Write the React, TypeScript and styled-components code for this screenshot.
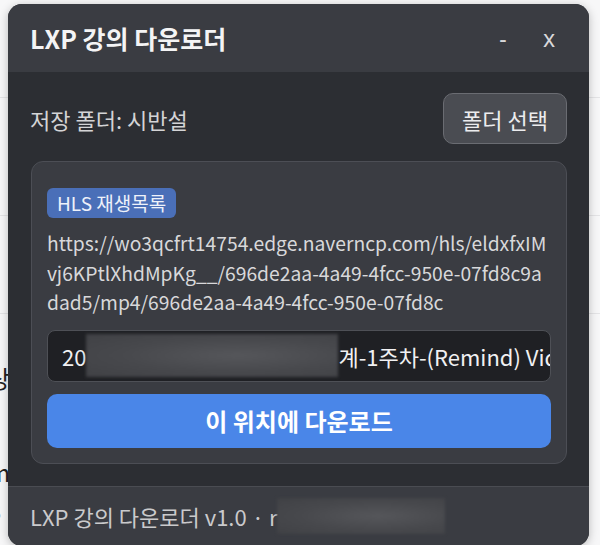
import styled, { createGlobalStyle } from "styled-components";

const GlobalStyle = createGlobalStyle`
  html, body {
    margin: 0;
    padding: 0;
    background: #f7f7f8;
  }
  body {
    font-family: "Noto Sans CJK KR", "Noto Sans", sans-serif;
  }
`;

const Desktop = styled.div`
  position: relative;
  width: 600px;
  height: 545px;
  overflow: hidden;
  background:
    linear-gradient(#e4e4e6, #e4e4e6) 0 97px / 100% 1px no-repeat,
    linear-gradient(#e4e4e6, #e4e4e6) 0 215px / 100% 1px no-repeat,
    linear-gradient(#e4e4e6, #e4e4e6) 0 313px / 100% 1px no-repeat,
    #f7f7f8;
`;

const BehindText = styled.span<{ $top: number; $color?: string }>`
  position: absolute;
  left: -12px;
  top: ${(p) => p.$top}px;
  font-size: 24px;
  line-height: 1;
  color: ${(p) => p.$color || "#222"};
`;

const Window = styled.div`
  position: absolute;
  left: 8px;
  top: 4px;
  width: 581px;
  height: 542px;
  border-radius: 14px;
  overflow: hidden;
  background: #2c2e33;
  box-shadow: 0 2px 10px rgba(0, 0, 0, 0.25);
  display: flex;
  flex-direction: column;
`;

const TitleBar = styled.div`
  height: 68px;
  flex-shrink: 0;
  background: #3a3c42;
  display: flex;
  align-items: center;
  gap: 26px;
  padding: 0 30px 0 22px;
`;

const Title = styled.h1`
  margin: 0;
  flex: 1;
  font-size: 25px;
  font-weight: 700;
  color: #f4f4f5;
`;

const WinButton = styled.button`
  border: 0;
  background: transparent;
  color: #d8d8da;
  font-family: "Noto Sans", sans-serif;
  font-size: 23px;
  padding: 0;
  width: 20px;
  text-align: center;
  cursor: pointer;
`;

const Body = styled.div`
  flex: 1;
  display: flex;
  flex-direction: column;
  gap: 17px;
  padding: 21px 22px 21px 23px;
`;

const FolderRow = styled.div`
  display: flex;
  align-items: center;
  justify-content: space-between;
`;

const FolderLabel = styled.span`
  font-size: 22px;
  color: #d4d4d6;
  margin-left: -1px;
`;

const GhostButton = styled.button`
  height: 51px;
  padding: 0 18px;
  border-radius: 10px;
  border: 1px solid #6a6c72;
  background: #4a4c52;
  color: #ececee;
  font-family: inherit;
  font-size: 22px;
  cursor: pointer;
`;

const Card = styled.div`
  display: flex;
  flex-direction: column;
  padding: 26px 15px 15px;
  border-radius: 12px;
  border: 1px solid #4c4e55;
  background: #3a3c42;
`;

const Badge = styled.span`
  align-self: flex-start;
  height: 30px;
  line-height: 30px;
  padding: 0 10px;
  border-radius: 6px;
  background: #4a6fb8;
  color: #eef2fa;
  font-size: 19px;
`;

const Url = styled.div`
  margin-top: 11px;
  font-size: 19.3px;
  line-height: 29.5px;
  color: #d8d8da;
  white-space: nowrap;
  overflow: hidden;
`;

const Field = styled.div`
  margin-top: 12px;
  height: 52px;
  box-sizing: border-box;
  display: flex;
  align-items: center;
  padding: 0 14px;
  border-radius: 8px;
  border: 1px solid #4e5056;
  background: #1f2024;
  color: #f0f0f2;
  font-size: 22px;
  white-space: nowrap;
  overflow: hidden;
`;

const Redacted = styled.span<{ $w: number; $h: number }>`
  display: inline-block;
  flex-shrink: 0;
  width: ${(p) => p.$w}px;
  height: ${(p) => p.$h}px;
  background: radial-gradient(ellipse at 60% 50%, #55565a 0%, #47484c 55%, #404145 100%);
  filter: blur(1.5px);
`;

const PrimaryButton = styled.button`
  margin-top: 12px;
  height: 54px;
  border: 0;
  border-radius: 10px;
  background: #4a86e8;
  color: #ffffff;
  font-family: inherit;
  font-size: 24px;
  font-weight: 700;
  cursor: pointer;
`;

const Footer = styled.div`
  height: 60px;
  flex-shrink: 0;
  box-sizing: border-box;
  border-top: 1px solid #4a4c52;
  background: #3a3c42;
  display: flex;
  align-items: center;
  padding: 0 22px 2px;
  font-size: 22px;
  color: #cacacc;
  white-space: nowrap;
`;

export default function App() {
  return (
    <>
      <GlobalStyle />
      <Desktop>
        <BehindText $top={366}>상</BehindText>
        <BehindText $top={460}>m</BehindText>
        <BehindText $top={498} $color="#9a9a9e">8</BehindText>
        <Window>
          <TitleBar>
            <Title>LXP 강의 다운로더</Title>
            <WinButton>-</WinButton>
            <WinButton>x</WinButton>
          </TitleBar>
          <Body>
            <FolderRow>
              <FolderLabel>저장 폴더: 시반설</FolderLabel>
              <GhostButton>폴더 선택</GhostButton>
            </FolderRow>
            <Card>
              <Badge>HLS 재생목록</Badge>
              <Url>
                https://wo3qcfrt14754.edge.naverncp.com/hls/eldxfxIM
                <br />
                vj6KPtlXhdMpKg__/696de2aa-4a49-4fcc-950e-07fd8c9a
                <br />
                dad5/mp4/696de2aa-4a49-4fcc-950e-07fd8c
              </Url>
              <Field>
                20
                <Redacted $w={252} $h={43} />
                계-1주차-(Remind) Video.mp4
              </Field>
              <PrimaryButton>이 위치에 다운로드</PrimaryButton>
            </Card>
          </Body>
          <Footer>
            LXP 강의 다운로더 v1.0 · r
            <Redacted $w={168} $h={36} />
          </Footer>
        </Window>
      </Desktop>
    </>
  );
}
